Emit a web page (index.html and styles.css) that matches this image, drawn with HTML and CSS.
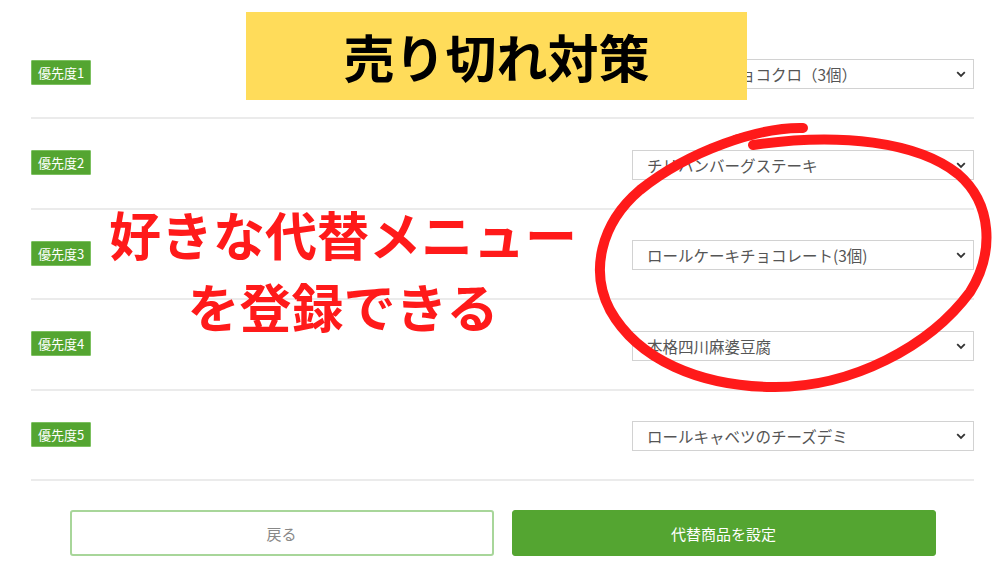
FILE: index.html
```html
<!DOCTYPE html>
<html lang="ja">
<head>
<meta charset="utf-8">
<title>売り切れ対策</title>
<link rel="stylesheet" href="styles.css">
</head>
<body>
<div class="page">
  <div class="list">
    <div class="row">
      <span class="badge">優先度1</span>
      <div class="select-wrap">
        <select class="select"><option>ベルギーのチョコクロ（3個）</option></select>
        <svg class="chev" viewBox="0 0 10 7" width="10" height="7"><path d="M1.2 1.2 L5 5 L8.8 1.2" fill="none" stroke="#333" stroke-width="1.8"/></svg>
      </div>
    </div>
    <div class="row">
      <span class="badge">優先度2</span>
      <div class="select-wrap">
        <select class="select"><option>チリハンバーグステーキ</option></select>
        <svg class="chev" viewBox="0 0 10 7" width="10" height="7"><path d="M1.2 1.2 L5 5 L8.8 1.2" fill="none" stroke="#333" stroke-width="1.8"/></svg>
      </div>
    </div>
    <div class="row">
      <span class="badge">優先度3</span>
      <div class="select-wrap">
        <select class="select"><option>ロールケーキチョコレート(3個)</option></select>
        <svg class="chev" viewBox="0 0 10 7" width="10" height="7"><path d="M1.2 1.2 L5 5 L8.8 1.2" fill="none" stroke="#333" stroke-width="1.8"/></svg>
      </div>
    </div>
    <div class="row">
      <span class="badge">優先度4</span>
      <div class="select-wrap">
        <select class="select"><option>本格四川麻婆豆腐</option></select>
        <svg class="chev" viewBox="0 0 10 7" width="10" height="7"><path d="M1.2 1.2 L5 5 L8.8 1.2" fill="none" stroke="#333" stroke-width="1.8"/></svg>
      </div>
    </div>
    <div class="row">
      <span class="badge">優先度5</span>
      <div class="select-wrap">
        <select class="select"><option>ロールキャベツのチーズデミ</option></select>
        <svg class="chev" viewBox="0 0 10 7" width="10" height="7"><path d="M1.2 1.2 L5 5 L8.8 1.2" fill="none" stroke="#333" stroke-width="1.8"/></svg>
      </div>
    </div>
  </div>
  <div class="actions">
    <button class="btn btn-back">戻る</button>
    <button class="btn btn-primary">代替商品を設定</button>
  </div>

  <div class="title-banner">売り切れ対策</div>
  <div class="callout">好きな代替メニュー<br>を登録できる</div>
  <svg class="scribble" viewBox="0 0 1000 563" width="1000" height="563">
    <path d="M803 128 C760 127 690 150 640 190 C600 224 590 272 610 310 C638 360 700 386 772 387 C852 388 930 346 970 292 C995 252 992 203 958 174 C918 142 840 132 753 145" fill="none" stroke="#ff1a1a" stroke-width="10" stroke-linecap="round"/>
    <path d="M790 129 C770 131 750 134 735 138" fill="none" stroke="#ff1a1a" stroke-width="6" stroke-linecap="round"/>
  </svg>
</div>
</body>
</html>
```

FILE: styles.css
```css
* { box-sizing: border-box; }

html, body {
  margin: 0;
  padding: 0;
  background: #ffffff;
}

body {
  font-family: "Noto Sans CJK JP", "Noto Sans", sans-serif;
}

.page {
  position: relative;
  width: 1000px;
  height: 563px;
  overflow: hidden;
}

.list {
  padding: 28.5px 26px 0 31px;
}

.row {
  display: flex;
  align-items: center;
  justify-content: space-between;
  height: 90.5px;
  border-bottom: 2px solid #ebebeb;
}

.badge {
  display: inline-block;
  height: 25px;
  padding: 0 6px;
  background: #54a531;
  color: #ffffff;
  font-size: 13px;
  border: 1px solid #7cc060;
  line-height: 23px;
  border-radius: 1px;
  margin-top: -1px;
}

.select-wrap {
  position: relative;
  width: 342px;
  height: 30px;
  margin-top: 3px;
}

.select {
  -webkit-appearance: none;
  appearance: none;
  width: 100%;
  height: 100%;
  border: 1px solid #d2d2d2;
  border-radius: 0;
  background: #ffffff;
  padding: 0 30px 0 14px;
  font-family: "Noto Sans CJK JP", sans-serif;
  font-size: 15.5px;
  color: #555555;
}

.chev {
  position: absolute;
  right: 8px;
  top: 12px;
}

.actions {
  display: flex;
  justify-content: center;
  gap: 18px;
  padding-left: 5px;
  margin-top: 29px;
}

.btn {
  width: 424px;
  height: 46px;
  border-radius: 3px;
  font-family: "Noto Sans CJK JP", sans-serif;
  font-size: 15px;
}

.btn-back {
  background: #ffffff;
  border: 2px solid #a8d69a;
  color: #888888;
}

.btn-primary {
  background: #54a531;
  border: 1px solid #54a531;
  color: #ffffff;
}

.title-banner {
  position: absolute;
  left: 246px;
  top: 12px;
  width: 501px;
  height: 88px;
  background: #ffdc5a;
  color: #000000;
  font-size: 51px;
  font-weight: 700;
  line-height: 88px;
  text-align: center;
}

.callout {
  position: absolute;
  left: 92px;
  top: 198px;
  width: 502px;
  text-align: center;
  color: #ff1a1a;
  font-size: 52px;
  font-weight: 700;
  line-height: 72px;
}

.scribble {
  position: absolute;
  left: 0;
  top: 0;
  pointer-events: none;
}
```
